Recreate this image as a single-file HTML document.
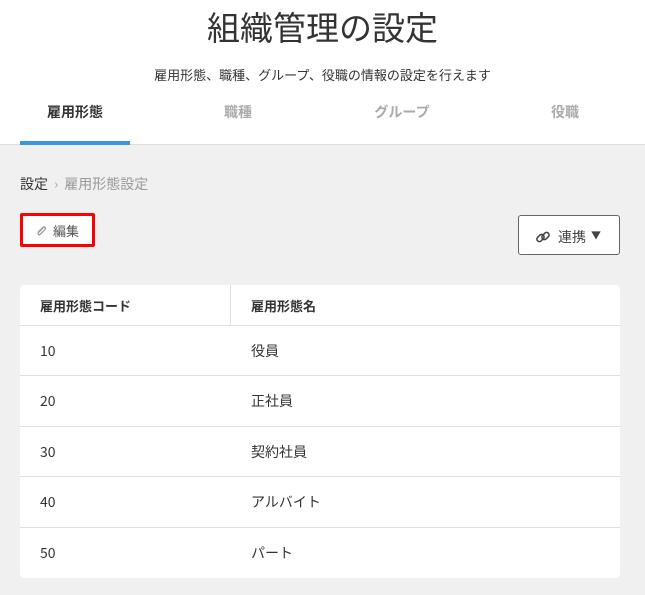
<!DOCTYPE html>
<html><head><meta charset="utf-8"><style>
*{margin:0;padding:0;box-sizing:border-box}
body{width:645px;height:595px;background:#f0f0f0;font-family:"Noto Sans CJK JP",sans-serif;color:#333;position:relative;overflow:hidden}
.hdr{position:absolute;left:0;top:0;width:645px;height:145px;background:#fff;border-bottom:1px solid #ddd}
.t{position:absolute;left:0;width:645px;text-align:center;line-height:1}
.tab{position:absolute;top:105px;font-size:14px;line-height:1;font-weight:bold;color:#aaa;transform:translateX(-50%)}
.ul{position:absolute;left:20px;top:141px;width:110px;height:4px;background:#3a96dd}
.bc{position:absolute;left:20px;top:177px;font-size:14px;line-height:1}
.edit{position:absolute;left:20px;top:213px;width:75px;height:34px;border:3px solid #f00;border-radius:2px;background:#fff;font-size:13px;line-height:1;color:#555;padding:8px 0 0 12px}
.rb{position:absolute;left:518px;top:215px;width:102px;height:40px;border:1px solid #666;border-radius:3px;background:#fff;font-size:14px;line-height:1;color:#444;padding:13px 0 0 16px}
.tbl{position:absolute;left:20px;top:285px;width:600px;height:293px;background:#fff;border-radius:4px}
.r{position:absolute;left:0;width:600px;height:50px;border-top:1px solid #e0e0e0;font-size:14px;line-height:1}
.r span{position:absolute;top:18px}
</style></head><body>
<div class="hdr">
<div class="t" style="top:10px;font-size:33px;color:#333">組織管理の設定</div>
<div class="t" style="top:68px;font-size:13px">雇用形態、職種、グループ、役職の情報の設定を行えます</div>
<div class="tab" style="left:75px;color:#333">雇用形態</div>
<div class="tab" style="left:238px">職種</div>
<div class="tab" style="left:402px">グループ</div>
<div class="tab" style="left:565px">役職</div>
<div class="ul"></div>
</div>
<div class="bc">設定<span style="color:#aaa;margin:0 6px">›</span><span style="color:#999">雇用形態設定</span></div>
<div class="edit"><svg width="12" height="12" viewBox="0 0 12 12" style="vertical-align:-1px;margin-right:6px"><path d="M9 2 L3.5 7.5 Q2.5 8.8 3.5 9.5 Q4.3 10.2 5.3 9.2 L10 4.5 Q11 3 9.8 2.2 Q8.7 1.5 7.7 2.5 L3 7.2" fill="none" stroke="#999" stroke-width="1.2"/></svg>編集</div>
<div class="rb"><svg width="16" height="16" viewBox="0 0 16 16" style="vertical-align:-3px;margin-right:7px"><rect x="1.5" y="6.5" width="8" height="5" rx="2.5" transform="rotate(-45 5.5 9)" fill="none" stroke="#444" stroke-width="1.6"/><rect x="6.5" y="4.5" width="8" height="5" rx="2.5" transform="rotate(-45 10.5 7)" fill="none" stroke="#444" stroke-width="1.6"/></svg>連携<span style="font-size:10px;vertical-align:3px;margin-left:5px">▼</span></div>
<div class="tbl">
<div style="position:absolute;left:210px;top:0;width:1px;height:40px;background:#e0e0e0"></div>
<div style="position:absolute;left:20px;top:14px;font-size:13px;line-height:1;font-weight:bold">雇用形態コード</div>
<div style="position:absolute;left:231px;top:14px;font-size:13px;line-height:1;font-weight:bold">雇用形態名</div>
<div class="r" style="top:40px"><span style="left:20px">10</span><span style="left:231px">役員</span></div>
<div class="r" style="top:90px"><span style="left:20px">20</span><span style="left:231px">正社員</span></div>
<div class="r" style="top:141px"><span style="left:20px">30</span><span style="left:231px">契約社員</span></div>
<div class="r" style="top:191px"><span style="left:20px">40</span><span style="left:231px">アルバイト</span></div>
<div class="r" style="top:242px"><span style="left:20px">50</span><span style="left:231px">パート</span></div>
</div>
</body></html>
